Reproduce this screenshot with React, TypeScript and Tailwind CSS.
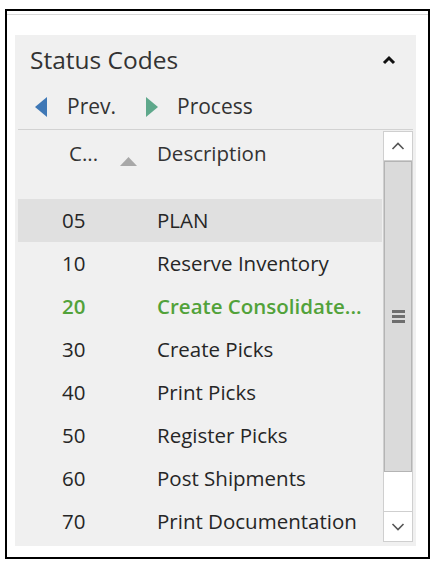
import React from 'react';

const rows = [
  { code: '05', desc: 'PLAN', selected: true },
  { code: '10', desc: 'Reserve Inventory' },
  { code: '20', desc: 'Create Consolidate...', current: true },
  { code: '30', desc: 'Create Picks' },
  { code: '40', desc: 'Print Picks' },
  { code: '50', desc: 'Register Picks' },
  { code: '60', desc: 'Post Shipments' },
  { code: '70', desc: 'Print Documentation' },
];

function Chevron({ up }: { up?: boolean }) {
  return (
    <svg width="14" height="8" viewBox="0 0 14 8" fill="none">
      <path
        d={up ? 'M1.5 7 L7 1.5 L12.5 7' : 'M1.5 1 L7 6.5 L12.5 1'}
        stroke="#555"
        strokeWidth="1.6"
      />
    </svg>
  );
}

function Scrollbar() {
  return (
    <div className="w-[30px] h-full flex flex-col border border-[#cfcfcf] bg-white">
      <div className="h-[29px] flex items-center justify-center border-b border-[#cfcfcf]">
        <Chevron up />
      </div>
      <div className="h-[311px] bg-[#dadada] border border-[#b4b4b4] flex items-center justify-center">
        <div className="flex flex-col gap-[2px]">
          <div className="w-[13px] h-[3px] bg-[#6e6e6e]" />
          <div className="w-[13px] h-[3px] bg-[#6e6e6e]" />
          <div className="w-[13px] h-[3px] bg-[#6e6e6e]" />
        </div>
      </div>
      <div className="flex-1" />
      <div className="h-[30px] flex items-center justify-center border-t border-[#cfcfcf]">
        <Chevron />
      </div>
    </div>
  );
}

export default function App() {
  return (
    <div
      className="w-[438px] h-[569px] bg-white overflow-hidden text-[#262626]"
      style={{ fontFamily: '"Segoe UI", "Open Sans", "Noto Sans", sans-serif' }}
    >
      <div className="ml-[5px] mt-[9px] w-[425px] h-[550px] border-2 border-black flex flex-col">
        <div className="h-[4px] border-b border-[#d8d8d8]" />

        {/* Panel */}
        <div className="ml-[8px] mt-[20px] w-[401px] h-[511px] bg-[#f0f0f0] flex flex-col">
          <div className="h-[50px] flex items-center justify-between pl-[15px] pr-[20px]">
            <span className="text-[24.5px] leading-none text-[#333]">Status Codes</span>
            <svg width="14" height="10" viewBox="0 0 14 10" fill="none">
              <path d="M2 8 L7 3 L12 8" stroke="#111" strokeWidth="3" />
            </svg>
          </div>

          <div className="h-[44px] flex items-center pl-[20px] text-[21px] text-[#333]">
            <svg width="12" height="20" viewBox="0 0 12 20">
              <polygon points="12,0 12,20 0,10" fill="#3f78b6" />
            </svg>
            <span className="ml-[20px]">Prev.</span>
            <svg width="12" height="20" viewBox="0 0 12 20" className="ml-[30px]">
              <polygon points="0,0 0,20 12,10" fill="#5ea88b" />
            </svg>
            <span className="ml-[19px]">Process</span>
          </div>

          <div className="mx-[3px] border-t border-[#d2d2d2]" />

          {/* Grid */}
          <div className="ml-[3px] w-[397px] h-[413px] flex">
            <div className="w-[364px] h-full overflow-hidden">
              <div className="h-[69px] flex pt-[8px] text-[20.5px] text-[#333]">
                <div className="w-[139px] flex items-start pl-[51px]">
                  <span className="w-[51px] leading-[30px]">C...</span>
                  <svg width="17" height="9" viewBox="0 0 17 9" className="mt-[19px]">
                    <polygon points="0,9 17,9 8.5,0" fill="#a8a8a8" />
                  </svg>
                </div>
                <span className="leading-[30px]">Description</span>
              </div>
              {rows.map((r) => (
                <div
                  key={r.code}
                  className={`h-[43px] flex items-center text-[20.5px] ${
                    r.selected ? 'bg-[#e0e0e0]' : ''
                  } ${r.current ? 'text-[#52a23a] font-semibold' : ''}`}
                >
                  <span className="w-[139px] pl-[44px]">{r.code}</span>
                  <span className="whitespace-nowrap">{r.desc}</span>
                </div>
              ))}
            </div>
            <div className="ml-[1px] pt-px h-[412px]">
              <Scrollbar />
            </div>
          </div>
        </div>
      </div>
    </div>
  );
}
